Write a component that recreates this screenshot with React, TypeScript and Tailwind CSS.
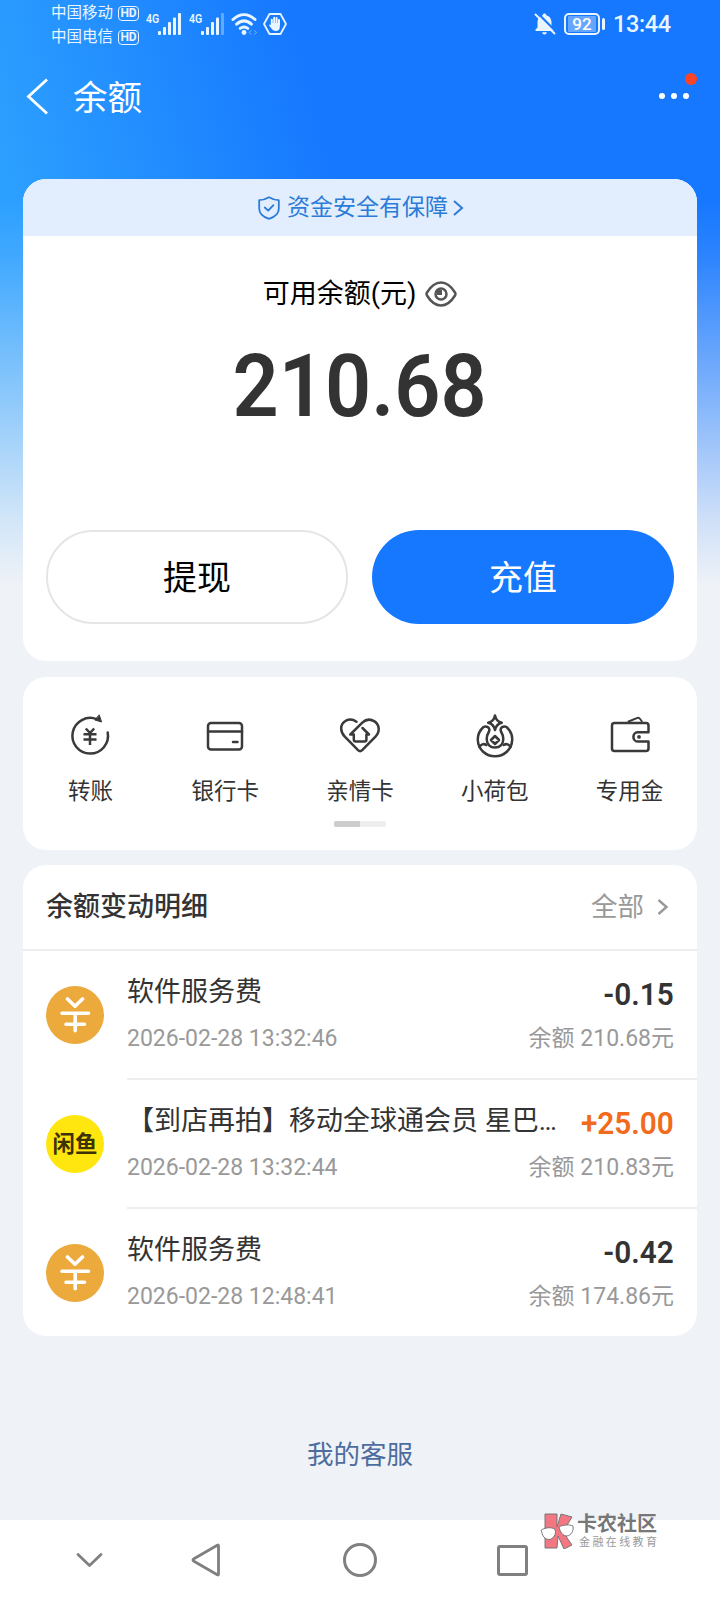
import React from 'react';

const records = [
  { icon: 'fee', title: '软件服务费', time: '2026-02-28 13:32:46', amount: '-0.15', balance: '210.68' },
  { icon: 'fish', title: '【到店再拍】移动全球通会员 星巴…', time: '2026-02-28 13:32:44', amount: '+25.00', balance: '210.83' },
  { icon: 'fee', title: '软件服务费', time: '2026-02-28 12:48:41', amount: '-0.42', balance: '174.86' },
];

const Signal: React.FC<{ weak?: boolean }> = ({ weak }) => (
  <div className="flex w-[36px] items-start">
    <span className="w-[12px] origin-left scale-x-[0.78] text-[13.5px] leading-[11px] font-semibold">4G</span>
    <svg width="24" height="22" viewBox="0 0 24 22" fill="currentColor">
      <rect x="0" y="18" width="3" height="4" rx="1" />
      <rect x="5" y="14" width="3" height="8" rx="1" />
      <rect x="10" y="9" width="3" height="13" rx="1" />
      <rect x="15" y="4.5" width="3" height="17.5" rx="1" />
      <rect x="20" y="0" width="3" height="22" rx="1" opacity={weak ? 0.35 : 1} />
    </svg>
  </div>
);

const Carrier: React.FC<{ name: string }> = ({ name }) => (
  <div className="flex h-[24px] items-center gap-[5px]">
    <span className="text-[15.5px] leading-[24px]">{name}</span>
    <span className="flex h-[15px] w-[21px] items-center justify-center rounded-[4px] border-[1.5px] border-current text-[12px] leading-none font-bold">HD</span>
  </div>
);

const StatusBar: React.FC = () => (
  <div className="flex h-[48px] items-start justify-between pr-[50px] pl-[51px] text-[#e9f6ff]">
    <div className="flex">
      <div className="w-[95px] pt-px">
        <Carrier name="中国移动" />
        <Carrier name="中国电信" />
      </div>
      <div className="flex pt-[13px]">
        <div className="mr-[7px]"><Signal /></div>
        <Signal weak />
        <svg className="ml-[6px]" width="28" height="22" viewBox="0 0 28 22" fill="none" stroke="currentColor" strokeWidth="3" strokeLinecap="round">
          <path d="M2 6.5C9 0 17 0 24 6.5" />
          <path d="M5.6 11.2c4.8-4.3 10-4.3 14.8 0" />
          <path d="M9.2 15.4c2.6-2 5-2 7.6 0" />
          <circle cx="13" cy="19.5" r="2.4" fill="currentColor" stroke="none" />
          <path d="m20 17.5-1.8 1.9 1.8 1.9m3.6-3.8 1.8 1.9-1.8 1.9" strokeWidth="1" opacity="0.45" />
        </svg>
        <svg className="ml-[4px]" width="24" height="22" viewBox="0 0 24 22">
          <path d="M6.5 1h11L23 11l-5.5 10h-11L1 11z" fill="none" stroke="currentColor" strokeWidth="1.8" strokeLinejoin="round" />
          <path d="M8.8 12V6.8M11.2 11V4.8M13.6 11V5M16 12V7" stroke="currentColor" strokeWidth="2" strokeLinecap="round" />
          <path d="M8 10h8.8v4c0 2.5-1.5 4-4 4-2 0-3.4-1-4.400-2.500l-2.200-3c-.4-1 .6-1.600 1.800-.5z" fill="currentColor" />
        </svg>
      </div>
    </div>
    <div className="flex h-[48px] items-center">
      <svg width="22" height="22" viewBox="0 0 22 22" fill="currentColor">
        <path d="M10.5.5c1 0 1.700.7 1.700 1.700 3.600.8 5.300 3.800 5.300 7.300v5l2 2V18h-18v-1.500l2-2v-5c0-3.500 1.700-6.500 5.300-7.300 0-1 .7-1.700 1.700-1.700zM8.200 19.300h4.600c-.2 1.400-1.100 2.200-2.300 2.200s-2.100-.8-2.300-2.200z" />
        <path d="m3.500 0 18 18" stroke="#1876ff" strokeWidth="2.200" />
        <path d="m1.500 1.500 19 19" stroke="currentColor" strokeWidth="1.900" strokeLinecap="round" />
      </svg>
      <div className="ml-[8px] flex h-[22px] w-[36px] items-center justify-center rounded-[5px] border-2 border-current">
        <span className="flex h-[16px] w-[28px] items-center justify-center rounded-[1px] bg-white/35 text-[17px] leading-none font-medium text-white">92</span>
      </div>
      <span className="ml-[2px] h-[12px] w-[3px] rounded-full bg-current" />
      <span className="mt-[2px] ml-[8px] w-[57px] text-[23.5px] leading-none font-medium tracking-[-0.4px]">13:44</span>
    </div>
  </div>
);

const stroke = {
  width: 44,
  height: 44,
  viewBox: '0 0 44 44',
  fill: 'none',
  stroke: '#3a3a3a',
  strokeWidth: 2.5,
  strokeLinecap: 'round',
  strokeLinejoin: 'round',
} as const;

const TransferIcon = () => (
  <svg {...stroke}>
    <path d="M29 5.300A17.800 17.800 0 1 0 39.700 18.500" />
    <path d="m31.300 1.200 2.300 6.800-6.500-1.900z" fill="#3a3a3a" strokeWidth="1" />
    <path d="m17.800 14.500 4.200 4.500 4.200-4.500M15.500 20.200h13M15.500 25.600h13M22 19v12" strokeWidth="2.500" strokeLinecap="butt" />
  </svg>
);

const BankCardIcon = () => (
  <svg {...stroke}>
    <rect x="5" y="9" width="34" height="26.500" rx="3" />
    <path d="M5 17.500h34M30 28h4.500" />
  </svg>
);

const FamilyIcon = () => (
  <svg {...stroke}>
    <path d="M18.500 7.800C11 2.500 3.200 8 3.200 14.500c0 3.500 1.400 6 3.600 8.200L20 36.200c1.500 1.400 2.700 1.400 4.200 0l13.300-13.500c4.800-5 4-12-1-15.300-4.300-2.700-9-1.800-12.200 1.300L12.300 20.500h3.500v5c0 1.200.8 2 2 2h8.600c1.200 0 2-.8 2-2v-5H31L24.500 14" />
  </svg>
);

const PurseIcon = () => (
  <svg {...stroke}>
    <path d="M22 1.500c.9 4.500 2.700 6.300 6.800 7.200-4.100 1-5.900 2.800-6.800 7.300-.9-4.500-2.700-6.300-6.800-7.300C19.300 7.800 21.100 6 22 1.500z" />
    <path d="M10.500 13C5.500 17.500 4.600 22 4.800 26 5.200 35.500 13 42.300 22 42.300S38.800 35.500 39.200 26c.2-4-.7-8.500-5.700-13-3.200-1.800-7 1.200-5.500 4.500 1.200 2 2.300 4.600 2.300 7.500 0 5.500-3.500 8.500-8.300 8.500s-8.300-3-8.300-8.500c0-2.900 1.100-5.500 2.300-7.500 1.500-3.300-2.300-6.300-5.500-4.500z" />
    <path d="M6.500 33c1.200-2.600 4.200-3.800 6.800-2M37.500 33c-1.200-2.600-4.200-3.800-6.800-2" />
    <path d="m22 22 4 4-4 4-4-4z" />
  </svg>
);

const WalletIcon = () => (
  <svg {...stroke}>
    <path d="M40.500 18.300V11.500c0-1.600-1-2.500-2.500-2.500H6.500C4.900 9 4 10 4 11.500v23c0 1.600.9 2.500 2.500 2.500H38c1.600 0 2.500-.9 2.500-2.500v-7H29.700c-5.700 0-5.700-9.200 0-9.200z" />
    <path d="m20.500 7.500 9-3.600c1.200-.4 1.900.1 2.800 1.400l1.500 2" strokeWidth="1.900" />
    <circle cx="31" cy="22.900" r="1.900" fill="#3a3a3a" stroke="none" />
  </svg>
);

const shortcuts = [
  { label: '转账', icon: TransferIcon },
  { label: '银行卡', icon: BankCardIcon },
  { label: '亲情卡', icon: FamilyIcon },
  { label: '小荷包', icon: PurseIcon },
  { label: '专用金', icon: WalletIcon },
];

const FeeAvatar = () => (
  <svg width="58" height="58" viewBox="0 0 58 58" fill="none" stroke="#fff" strokeWidth="3.600" strokeLinecap="round" strokeLinejoin="round">
    <circle cx="29" cy="29" r="29" fill="#eca93c" stroke="none" />
    <path d="m21.500 13 7.500 7.200 7.500-7.200M16 27.300h26.500M20 38.300h18.500M29.200 27.300v17.500" />
  </svg>
);

const FishAvatar = () => (
  <div className="flex size-[58px] items-center justify-center rounded-full bg-[#ffe60f]">
    <span className="text-[22.5px] leading-none font-bold text-[#3c3206]">闲鱼</span>
  </div>
);

const BalanceCard: React.FC = () => (
  <section className="h-[482px] overflow-hidden rounded-[23px] bg-white">
    <div className="flex h-[57px] items-center justify-center bg-[#e2eefd] pl-[2px] text-[#2b7bd9]">
      <svg width="22" height="24" viewBox="0 0 22 24" fill="none" stroke="currentColor" strokeWidth="1.800" strokeLinecap="round" strokeLinejoin="round">
        <path d="M11 1.200c3 1.800 6 2.800 9.800 3v8.300c0 5-4 8.500-9.800 10.300C5.200 21 1.200 17.500 1.200 12.500V4.200C5 4 8 3 11 1.200z" />
        <path d="m6.800 11.500 3.400 3.200 5.200-5.600" />
      </svg>
      <span className="ml-[7px] text-[23px] leading-[34px]">资金安全有保障</span>
      <svg className="ml-[4px]" width="12" height="18" viewBox="0 0 12 18" fill="none" stroke="currentColor" strokeWidth="2">
        <path d="m2 2 8 7-8 7" />
      </svg>
    </div>
    <div className="mt-[38px] flex h-[40px] items-center justify-center">
      <span className="text-[27px] text-black">可用余额(元)</span>
      <svg className="ml-[9px]" width="32" height="26" viewBox="0 0 32 26" fill="none" stroke="#555" strokeWidth="2.500">
        <path d="M2 11.500C6 5 11 1.500 16 1.500S26 5 30 11.500c.6 1 .6 2 0 3C26 21 21 24.500 16 24.500S6 21 2 14.500c-.6-1-.6-2 0-3z" />
        <circle cx="16" cy="13" r="5.500" />
        <path d="M12 9h5v5h-5z" fill="#555" stroke="none" />
      </svg>
    </div>
    <div className="mt-[29px] flex h-[86px] items-center justify-center">
      <span className="scale-x-[0.93] text-[87px] leading-none font-semibold text-[#333]">210.68</span>
    </div>
    <div className="mt-[101px] grid grid-cols-2 gap-[24px] px-[23px]">
      <button className="h-[94px] rounded-full border-2 border-[#e5e5e5] pt-[3px] text-[34px] text-black">提现</button>
      <button className="h-[94px] rounded-full bg-[#1677ff] pt-[3px] text-[34px] text-white">充值</button>
    </div>
  </section>
);

const Shortcuts: React.FC = () => (
  <section className="mt-[16px] h-[173px] rounded-[23px] bg-white pt-[37px]">
    <div className="grid grid-cols-5">
      {shortcuts.map((item) => (
        <div key={item.label} className="flex flex-col items-center">
          <item.icon />
          <span className="mt-[16px] text-[22.5px] leading-[34px] text-[#333]">{item.label}</span>
        </div>
      ))}
    </div>
    <div className="mx-auto mt-[13px] h-[6px] w-[52px] overflow-hidden rounded-[2px] bg-[#eee]">
      <div className="h-full w-1/2 bg-[#ccc]" />
    </div>
  </section>
);

const RecordList: React.FC = () => (
  <section className="mt-[15px] h-[471px] overflow-hidden rounded-[23px] bg-white">
    <div className="flex h-[86px] items-center justify-between border-b-2 border-[#eee] pr-[28px] pl-[23px]">
      <h2 className="text-[27px] font-medium text-[#333]">余额变动明细</h2>
      <div className="flex items-center text-[26.5px] text-[#999]">
        全部
        <svg className="ml-[13px]" width="12" height="18" viewBox="0 0 12 18" fill="none" stroke="currentColor" strokeWidth="2.400">
          <path d="m1.500 2 8 7-8 7" />
        </svg>
      </div>
    </div>
    {records.map((r) => (
      <div key={r.time} className="flex h-[129px] items-center pl-[23px]">
        <div className="-mt-px">{r.icon === 'fee' ? <FeeAvatar /> : <FishAvatar />}</div>
        <div className="ml-[23px] h-full min-w-0 flex-1 border-b-2 border-[#eee] pt-[21px] pr-[23px]">
          <div className="flex h-[40px] items-center justify-between">
            <span className="text-[27px] leading-[40px] whitespace-nowrap text-[#333]">{r.title}</span>
            <span className={`mt-[3px] origin-right scale-x-[0.93] text-[32px] leading-none font-semibold ${r.amount.startsWith('+') ? 'text-[#f26a1b]' : 'text-[#333]'}`}>{r.amount}</span>
          </div>
          <div className="mt-[10px] flex h-[34px] items-center justify-between text-[23px] leading-[34px] text-[#999]">
            <span>{r.time}</span>
            <span>余额 {r.balance}元</span>
          </div>
        </div>
      </div>
    ))}
  </section>
);

const Watermark: React.FC = () => (
  <div className="absolute top-[1512px] left-[540px] flex">
    <svg width="35" height="37" viewBox="0 0 35 37" stroke="#777" strokeWidth="1" strokeLinejoin="round">
      <path d="M5 2h12v13l4-13 11 3-9 15 9 13-8 4-6-13-1 12H5z" fill="#f27782" />
      <path d="M1 18.500c3-3 11-4 14-1 2 4-2 10-6 10s-7-4-7-7zM19 15c3-2 10-3 14-1 1 5-2 9.500-6 10-4 0-7-4-8-9z" fill="#fff" />
    </svg>
    <div className="ml-[2px] text-[#777]">
      <div className="mt-[2px] text-[20px] leading-[21px] font-bold">卡农社区</div>
      <div className="ml-[2px] text-[11px] leading-[16px] tracking-[2.4px] text-[#999]">金融在线教育</div>
    </div>
  </div>
);

const NavBar: React.FC = () => (
  <nav className="flex h-[80px] items-center bg-white text-[#808080]">
    <svg className="ml-[76px]" width="27" height="16" viewBox="0 0 27 16" fill="none" stroke="currentColor" strokeWidth="2.800" strokeLinecap="round" strokeLinejoin="round">
      <path d="m2 2.500 11.500 11L25 2.500" />
    </svg>
    <svg className="ml-[87px]" width="32" height="36" viewBox="0 0 32 36" fill="none" stroke="currentColor" strokeWidth="2.800" strokeLinejoin="round">
      <path d="M28.500 3.800v28.400c0 .8-.6 1-1.200.5L3.500 19c-.7-.6-.7-1.400 0-2L27.300 3.300c.6-.5 1.200-.3 1.200.5z" />
    </svg>
    <span className="ml-[121px] size-[34px] rounded-full border-3 border-current" />
    <span className="ml-[120px] size-[31px] rounded-[3px] border-3 border-current" />
  </nav>
);

export default function App() {
  return (
    <div className="relative flex h-[1600px] w-[720px] flex-col overflow-hidden bg-[#eff2f7] bg-[linear-gradient(180deg,rgba(239,242,247,0)_200px,rgba(239,242,247,0.1)_255px,rgba(239,242,247,0.5)_400px,rgba(239,242,247,0.85)_520px,#eff2f7_585px),linear-gradient(75deg,#2ca0ff_110px,#1677ff_440px)] bg-[length:720px_590px] bg-no-repeat font-[Roboto,'Noto_Sans_CJK_SC',sans-serif]">
      <StatusBar />
      <header className="flex h-[96px] items-center justify-between pr-[31px] pl-[26px] text-white">
        <div className="flex items-center">
          <svg width="23" height="37" viewBox="0 0 23 37" fill="none" stroke="currentColor" strokeWidth="2.800">
            <path d="M21 1.500 2.500 18.500 21 35.500" />
          </svg>
          <h1 className="mt-[3px] ml-[24px] text-[34.5px] leading-[48px]">余额</h1>
        </div>
        <div className="relative flex gap-[6px]">
          <span className="size-[6px] rounded-full bg-white" />
          <span className="size-[6px] rounded-full bg-white" />
          <span className="size-[6px] rounded-full bg-white" />
          <span className="absolute -top-[20px] left-[26px] size-[12px] rounded-full bg-[#fb4426]" />
        </div>
      </header>
      <main className="flex-1 px-[23px] pt-[35px]">
        <BalanceCard />
        <Shortcuts />
        <RecordList />
        <div className="mt-[99px] text-center text-[26.5px] leading-[40px] text-[#4d6d9e]">我的客服</div>
      </main>
      <NavBar />
      <Watermark />
    </div>
  );
}
